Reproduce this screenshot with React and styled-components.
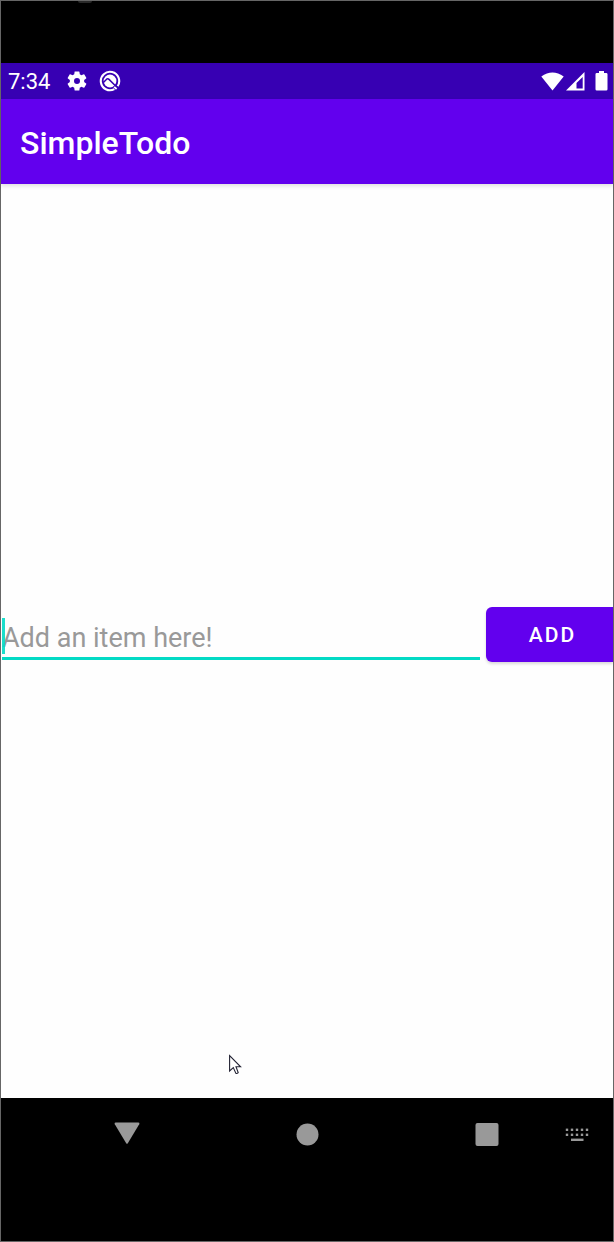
import React from "react";
import styled, { createGlobalStyle } from "styled-components";

const GlobalStyle = createGlobalStyle`
  *, *::before, *::after { box-sizing: border-box; }
  body { margin: 0; background: #000; font-family: Roboto, "Liberation Sans", sans-serif; }
  button, input { font: inherit; margin: 0; border: 0; padding: 0; border-radius: 0; }
`;

const Device = styled.div`
  position: relative;
  display: flex;
  flex-direction: column;
  min-height: 100vh;
  padding: 62px 0 71px;
  border: 1px solid #666;
  background: #000;
`;

const CameraEdge = styled.span`
  position: absolute;
  top: 0;
  left: 77px;
  width: 14px;
  height: 2px;
  border-radius: 0 0 7px 7px;
  background: #2a2a2a;
`;

const StatusBar = styled.header`
  display: flex;
  align-items: center;
  height: 36px;
  padding: 0 5px 0 7px;
  background: #3700b3;
  color: #fff;
`;

const Clock = styled.time`
  width: 57px;
  padding-top: 2px;
  font-size: 22px;
  line-height: 34px;
`;

const StatusIcon = styled.svg`
  display: block;
  flex: none;
  margin-left: ${(p) => p.$gap || 0}px;
`;

const Spacer = styled.div`
  flex: 1;
`;

const AppBar = styled.div`
  position: relative;
  z-index: 1;
  display: flex;
  align-items: center;
  height: 85px;
  padding: 2px 19px 0;
  background: #6200ee;
  box-shadow: 0 2px 4px rgba(0, 0, 0, 0.12);
`;

const Title = styled.h1`
  margin: 0;
  color: #fff;
  font-size: 32px;
  font-weight: 500;
  line-height: 40px;
`;

const Content = styled.main`
  display: flex;
  flex: 1;
  flex-direction: column;
  justify-content: center;
  padding-bottom: 13px;
  position: relative;
  overflow: hidden;
  background: #fefefe;
`;

const Form = styled.form`
  display: flex;
  align-items: center;
  gap: 6px;
`;

const Field = styled.label`
  position: relative;
  flex: 1;
  min-width: 0;
  margin-left: 1px;
`;

const TextInput = styled.input`
  display: block;
  width: 100%;
  height: 50px;
  padding-top: 9px;
  border-bottom: 3px solid #03dac5;
  outline: none;
  background: transparent;
  color: #222;
  font-size: 27px;
  &::placeholder { color: #999; opacity: 1; }
`;

const Caret = styled.span`
  position: absolute;
  left: 0;
  bottom: 6px;
  width: 3px;
  height: 36px;
  background: rgba(3, 218, 197, 0.9);
`;

const AddButton = styled.button`
  flex: none;
  width: 127px;
  height: 55px;
  padding-left: 6px;
  border-radius: 6px 0 0 6px;
  background: #6200ee;
  box-shadow: 0 2px 3px rgba(0, 0, 0, 0.15);
  color: #fff;
  font-size: 21px;
  font-weight: 500;
  letter-spacing: 2px;
`;

const Pointer = styled.svg`
  position: absolute;
  left: 228px;
  bottom: 23px;
`;

const NavBar = styled.nav`
  display: flex;
  align-items: center;
  height: 72px;
  padding: 0 16px 0 106px;
  background: #000;
`;

const NavGroup = styled.div`
  display: flex;
  flex: 1;
  justify-content: space-between;
  margin-right: 50px;
`;

const NavButton = styled.button`
  display: flex;
  align-items: center;
  justify-content: center;
  width: 40px;
  height: 40px;
  background: transparent;
  color: #999;
`;

function StatusIcons() {
  return (
    <>
      <StatusIcon width="24" height="24" viewBox="0 0 24 24" fill="#fff" aria-label="Settings">
        <path d="M19.14 12.94c.04-.3.06-.61.06-.94 0-.32-.02-.64-.07-.94l2.03-1.58a.49.49 0 0 0 .12-.61l-1.92-3.32a.488.488 0 0 0-.59-.22l-2.39.96c-.5-.38-1.03-.7-1.62-.94l-.36-2.54a.484.484 0 0 0-.48-.41h-3.84c-.24 0-.43.17-.47.41l-.36 2.54c-.59.24-1.13.57-1.62.94l-2.39-.96c-.22-.08-.47 0-.59.22L2.74 8.87c-.12.21-.08.47.12.61l2.03 1.58c-.05.3-.09.63-.09.94s.02.64.07.94l-2.03 1.58a.49.49 0 0 0-.12.61l1.92 3.32c.12.22.37.29.59.22l2.39-.96c.5.38 1.03.7 1.62.94l.36 2.54c.05.24.24.41.48.41h3.84c.24 0 .44-.17.47-.41l.36-2.54c.59-.24 1.13-.56 1.62-.94l2.39.96c.22.08.47 0 .59-.22l1.92-3.32c.12-.22.07-.47-.12-.61zM12 15a3 3 0 1 1 0-6 3 3 0 0 1 0 6z" />
      </StatusIcon>
      <StatusIcon $gap={10} width="22" height="22" viewBox="0 0 22 22" fill="none" aria-label="System">
        <path d="M15.4 19.1A9.2 9.2 0 1 1 18.6 16.2" stroke="#fff" strokeWidth="2.1" />
        <circle cx="11" cy="11" r="6.4" fill="#fff" />
        <path d="M4.4 12.6L7.6 9.2Q8.8 8.2 10 9.4L18.4 17.8" stroke="#3700b3" strokeWidth="1.5" />
        <path d="M15.2 16.8L17.6 19" stroke="#fff" strokeWidth="1.8" />
      </StatusIcon>
    </>
  );
}

export default function App() {
  return (
    <>
      <GlobalStyle />
      <Device>
        <CameraEdge />
        <StatusBar>
          <Clock>7:34</Clock>
          <StatusIcons />
          <Spacer />
          <StatusIcon width="23" height="19" viewBox="0 0 23 19" fill="#fff" aria-label="Wi-Fi">
            <path d="M0.3 4.4Q11.5-3.6 22.7 4.4L11.5 18.6z" />
          </StatusIcon>
          <StatusIcon $gap={2} width="19" height="19" viewBox="0 0 19 19" aria-label="Mobile signal">
            <path fill="#fff" fillRule="evenodd" d="M0 18.5L18.5 0V18.5zM10.5 16.5H16.7V5L10.5 11z" />
          </StatusIcon>
          <StatusIcon $gap={10} width="13" height="20" viewBox="0 0 13 20" fill="#fff" aria-label="Battery">
            <path d="M4 0H9V2H11.2Q12.5 2 12.5 3.3V18.2Q12.5 19.5 11.2 19.5H1.8Q.5 19.5 .5 18.2V3.3Q.5 2 1.8 2H4z" />
          </StatusIcon>
        </StatusBar>
        <AppBar>
          <Title>SimpleTodo</Title>
        </AppBar>
        <Content>
          <Form onSubmit={(e) => e.preventDefault()}>
            <Field>
              <TextInput type="text" aria-label="New item" placeholder="Add an item here!" />
              <Caret />
            </Field>
            <AddButton type="submit">ADD</AddButton>
          </Form>
          <Pointer width="13" height="21" viewBox="0 0 13 21" aria-hidden="true">
            <path d="M.6 1.5V17L4.3 13.6L6.8 19.2Q8 20 9.2 18.6L7 12.8H11.6z" fill="#fff" stroke="#223" strokeWidth="1.1" />
          </Pointer>
        </Content>
        <NavBar>
          <NavGroup>
            <NavButton type="button" aria-label="Back">
              <svg width="26" height="24" viewBox="0 0 26 24" fill="currentColor">
                <path d="M1.5 .5H24.5Q26 .8 25.2 2.2L13.8 21.3Q13 22.4 12.2 21.3L.8 2.2Q0 .8 1.5 .5z" />
              </svg>
            </NavButton>
            <NavButton type="button" aria-label="Home">
              <svg width="24" height="24" viewBox="0 0 24 24" fill="currentColor">
                <circle cx="12.5" cy="12.5" r="11" />
              </svg>
            </NavButton>
            <NavButton type="button" aria-label="Recent apps">
              <svg width="24" height="24" viewBox="0 0 24 24" fill="currentColor">
                <rect x=".5" y="1" width="23" height="23" rx="2" />
              </svg>
            </NavButton>
          </NavGroup>
          <NavButton type="button" aria-label="Keyboard">
            <svg width="24" height="14" viewBox="0 0 24 14" fill="currentColor">
              {[0, 5, 10, 15, 20].map((x) => (
                <React.Fragment key={x}>
                  <rect x={x + 0.8} y="1.6" width="2.4" height="2.4" />
                  <rect x={x + 0.8} y="6.6" width="2.4" height="2.4" />
                </React.Fragment>
              ))}
              <rect x="6" y="11.6" width="12.5" height="2.4" />
            </svg>
          </NavButton>
        </NavBar>
      </Device>
    </>
  );
}
